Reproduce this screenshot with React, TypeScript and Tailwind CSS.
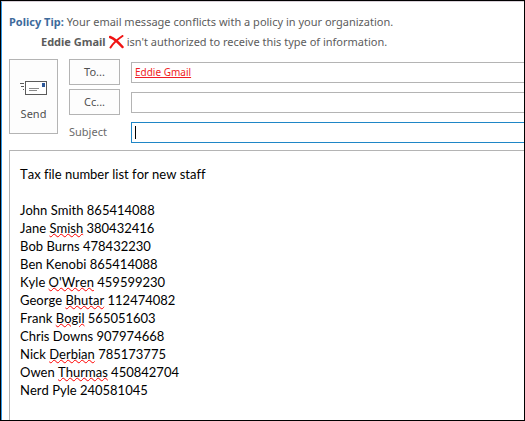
type Entry = { first: string; last: string; number: string; misspelled?: boolean };

const entries: Entry[] = [
  { first: "John", last: "Smith", number: "865414088" },
  { first: "Jane", last: "Smish", number: "380432416", misspelled: true },
  { first: "Bob", last: "Burns", number: "478432230" },
  { first: "Ben", last: "Kenobi", number: "865414088" },
  { first: "Kyle", last: "O'Wren", number: "459599230", misspelled: true },
  { first: "George", last: "Bhutar", number: "112474082", misspelled: true },
  { first: "Frank", last: "Bogil", number: "565051603", misspelled: true },
  { first: "Chris", last: "Downs", number: "907974668" },
  { first: "Nick", last: "Derbian", number: "785173775", misspelled: true },
  { first: "Owen", last: "Thurmas", number: "450842704", misspelled: true },
  { first: "Nerd", last: "Pyle", number: "240581045" },
];

function SendIcon() {
  return (
    <svg width="28" height="14" viewBox="0 0 28 14" fill="none" aria-hidden="true">
      <rect x="5.5" y="0.5" width="21" height="13" fill="#fff" stroke="#5a5a5a" />
      <path d="M0 2.500h4M1 5.500h3M3 8.500h1" stroke="#5a5a5a" />
      <path d="M9 7.500h10M9 9.500h8" stroke="#8a8a8a" />
      <rect x="22" y="2" width="3" height="4" fill="#2b579a" />
    </svg>
  );
}

function RemoveIcon() {
  return (
    <svg width="15" height="14" viewBox="0 0 15 14" fill="none" aria-hidden="true">
      <path d="M1 2C5 3.500 10 8 13.500 12" stroke="#f01414" strokeWidth="2.500" strokeLinecap="round" />
      <path d="M13.500 1C9 4 4 8.500 1.500 12.500" stroke="#f01414" strokeWidth="2" strokeLinecap="round" />
    </svg>
  );
}

function PolicyTip() {
  return (
    <div className="text-[11px] leading-5 text-[#5c5c5c]">
      <p>
        <strong className="font-bold text-[#3d6b9c]">Policy Tip:</strong> Your email message conflicts with a policy in
        your organization.
      </p>
      <p className="flex items-center gap-[3px] pl-8">
        <strong className="font-bold">Eddie Gmail</strong>
        <button type="button" aria-label="Remove Eddie Gmail">
          <RemoveIcon />
        </button>
        <span>isn't authorized to receive this type of information.</span>
      </p>
    </div>
  );
}

export default function App() {
  return (
    <main className="flex min-h-screen flex-col border border-black bg-white font-['Noto_Sans',sans-serif]">
      <div className="flex grow flex-col border-l border-t border-l-[#3399e6] border-t-[#d8d0d8] pl-[7px] pt-[10px]">
        <PolicyTip />
        <div className="flex gap-[11px] pt-[7px]">
          <button
            type="button"
            className="flex h-[75px] w-[49px] shrink-0 flex-col items-center gap-[10px] border border-[#b4b4b4] bg-[#fdfdfd] pt-[21px] text-[11px] leading-[18px] text-[#505050]"
          >
            <SendIcon />
            Send
          </button>
          <div className="grid grow auto-rows-[26px] grid-cols-[51px_1fr] items-center gap-x-[11px] gap-y-1 text-[11px] text-[#505050]">
            <button type="button" className="h-[26px] border border-[#b4b4b4] bg-[#fdfdfd]">
              To...
            </button>
            <div className="flex h-[21px] items-center border-y border-l border-[#b4b4b4] pl-[3px]">
              <a href="#eddie-gmail" className="text-[10px] leading-4 text-[#f01c24] underline underline-offset-1">
                Eddie Gmail
              </a>
            </div>
            <button type="button" className="h-[26px] border border-[#b4b4b4] bg-[#fdfdfd]">
              Cc...
            </button>
            <input
              type="text"
              aria-label="Cc"
              className="h-[21px] w-full border-y border-l border-[#b4b4b4] px-1 outline-none"
            />
            <label htmlFor="subject" className="text-[#6a6a6a]">
              Subject
            </label>
            <div className="flex h-[21px] items-center border-y border-l border-[#1f86c6] pl-[3px]">
              <span className="h-[13px] w-px bg-black" />
              <input id="subject" type="text" className="w-full outline-none" />
            </div>
          </div>
        </div>
        <div
          role="textbox"
          aria-label="Message"
          aria-multiline="true"
          contentEditable
          suppressContentEditableWarning
          spellCheck={false}
          className="mt-[5px] grow border-l border-t border-[#b4b4b4] pl-[10px] pt-[14px] font-['Lato',sans-serif] text-[13px] leading-[18px] text-black outline-none [font-kerning:none] [font-variant-ligatures:none]"
        >
          <p className="mb-[18px]">Tax file number list for new staff</p>
          {entries.map((entry) => (
            <p key={entry.last}>
              {entry.first}{" "}
              {entry.misspelled ? (
                <span className="underline decoration-[#ff0000] decoration-wavy decoration-1 underline-offset-0">
                  {entry.last}
                </span>
              ) : (
                entry.last
              )}{" "}
              {entry.number}
            </p>
          ))}
        </div>
      </div>
    </main>
  );
}
